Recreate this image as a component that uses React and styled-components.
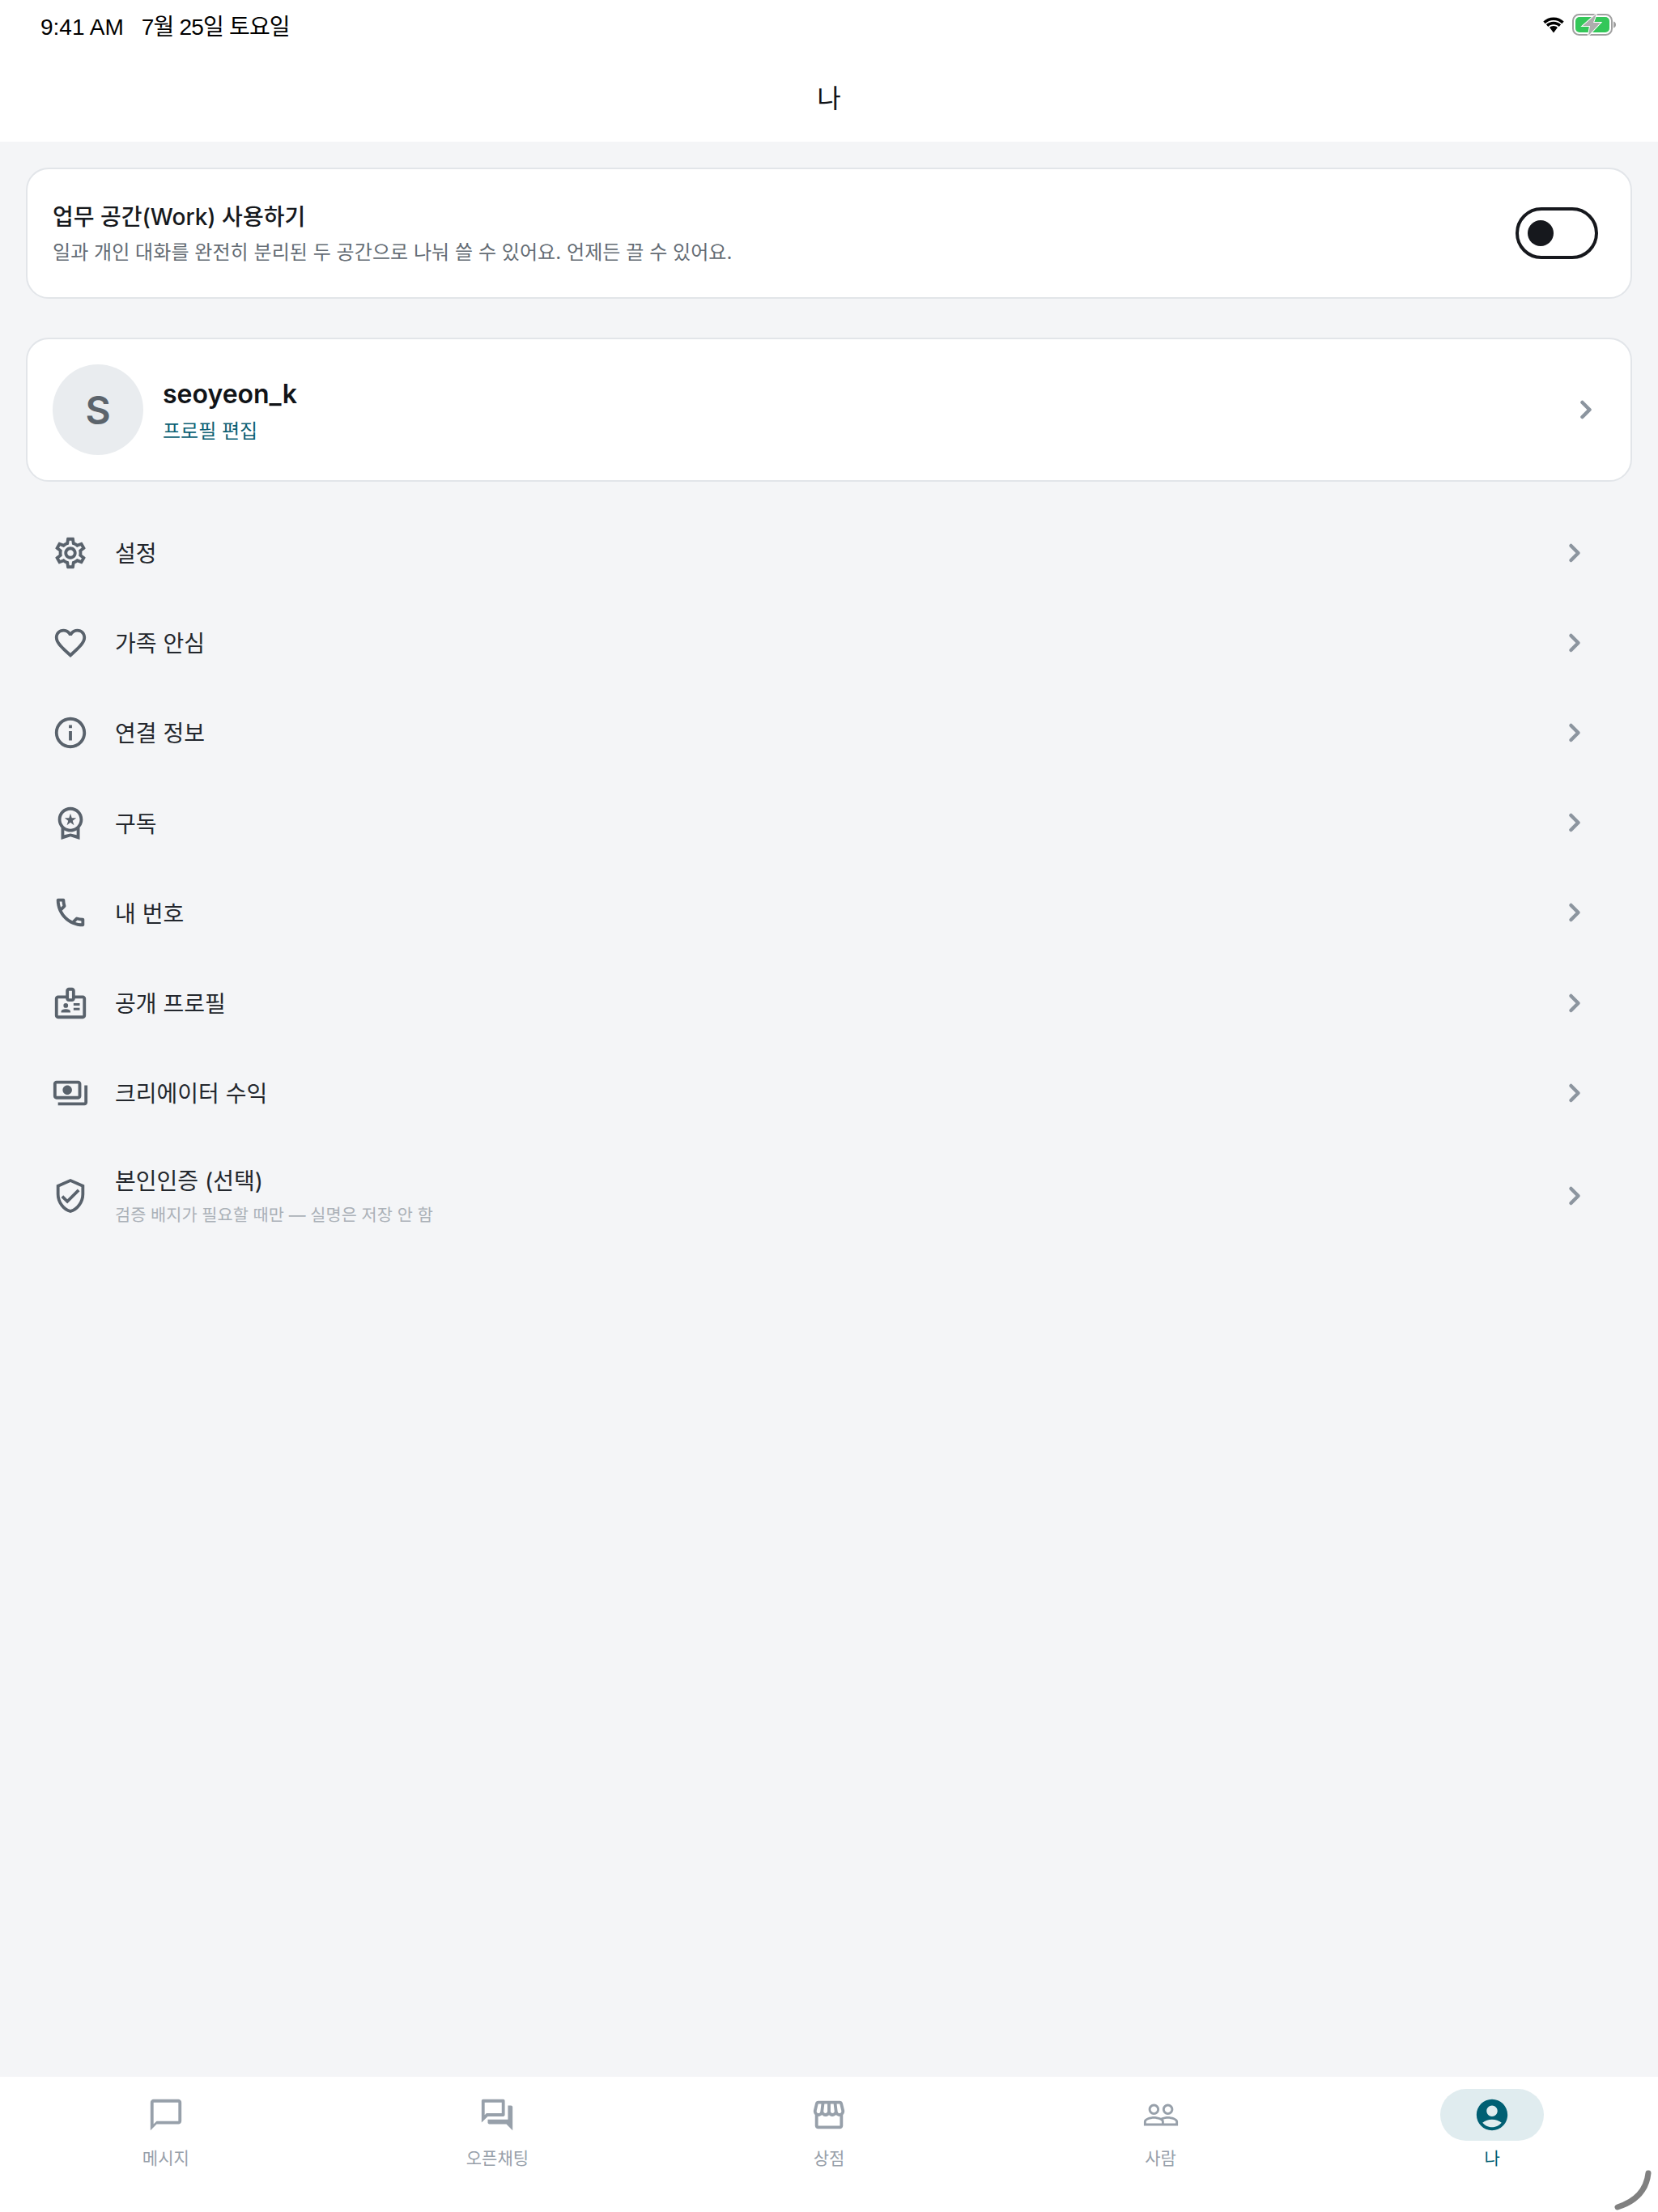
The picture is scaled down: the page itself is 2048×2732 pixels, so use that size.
import React from 'react';
import styled, { createGlobalStyle } from 'styled-components';
import { ChevronRight } from 'lucide-react';
import {
  MdOutlineSettings,
  MdFavoriteBorder,
  MdInfoOutline,
  MdOutlineWorkspacePremium,
  MdOutlineCall,
  MdOutlineBadge,
  MdOutlinePayments,
  MdOutlineVerifiedUser,
  MdOutlineChatBubbleOutline,
  MdOutlineForum,
  MdOutlineStorefront,
  MdPeopleOutline,
  MdAccountCircle,
} from 'react-icons/md';

const GlobalStyle = createGlobalStyle`
  html, body {
    margin: 0;
    padding: 0;
    background: #f4f5f7;
  }
  * {
    box-sizing: border-box;
  }
  body {
    font-family: Inter, "Noto Sans CJK KR", sans-serif;
  }
`;

const menuItems = [
  { icon: MdOutlineSettings, label: '설정' },
  { icon: MdFavoriteBorder, label: '가족 안심' },
  { icon: MdInfoOutline, label: '연결 정보' },
  { icon: MdOutlineWorkspacePremium, label: '구독' },
  { icon: MdOutlineCall, label: '내 번호' },
  { icon: MdOutlineBadge, label: '공개 프로필' },
  { icon: MdOutlinePayments, label: '크리에이터 수익' },
  {
    icon: MdOutlineVerifiedUser,
    label: '본인인증 (선택)',
    hint: '검증 배지가 필요할 때만 — 실명은 저장 안 함',
  },
];

const tabs = [
  { icon: MdOutlineChatBubbleOutline, label: '메시지' },
  { icon: MdOutlineForum, label: '오픈채팅' },
  { icon: MdOutlineStorefront, label: '상점' },
  { icon: MdPeopleOutline, label: '사람' },
  { icon: MdAccountCircle, label: '나', active: true },
];

const App = () => {
  return (
    <Page>
      <GlobalStyle />
      <TopArea>
        <StatusBar>
          <StatusText>
            <StatusTime>9:41 AM</StatusTime>
            <span>7월 25일 토요일</span>
          </StatusText>
          <StatusIcons>
            <svg width="28" height="20" viewBox="0 0 28 20">
              <path d="M14 4c4 0 7.600 1.600 10.300 4.200l2.400-2.600C23.400 2.300 18.900.4 14 .4S4.600 2.300 1.300 5.600l2.400 2.600C6.400 5.600 10 4 14 4z" fill="#000" />
              <path d="M14 9.200c2.600 0 5 1 6.700 2.700l2.400-2.600C20.700 7 17.500 5.700 14 5.700S7.300 7 4.900 9.300l2.400 2.600C9 10.200 11.400 9.200 14 9.200z" fill="#000" />
              <path d="M14 11c-1.900 0-3.600.7-4.900 1.900L14 19.600l4.900-6.700C17.600 11.700 15.900 11 14 11z" fill="#000" />
            </svg>
            <BatteryIcon width="54" height="28" viewBox="0 0 54 28">
              <rect x="1" y="1" width="48" height="25" rx="7.500" fill="none" stroke="#a0a0a0" strokeWidth="2" />
              <rect x="4" y="4" width="42" height="19" rx="5" fill="#34c759" />
              <path d="M51 9.500c2 .5 3 2 3 4s-1 3.500-3 4z" fill="#a0a0a0" />
              <path d="M30 0 13 15h9l-2 12 15-16h-9z" fill="#adadad" stroke="#fff" strokeWidth="2" paintOrder="stroke" />
            </BatteryIcon>
          </StatusIcons>
        </StatusBar>
        <Header>나</Header>
      </TopArea>

      <Main>
        <Card $padding="35px 31px">
          <WorkInfo>
            <WorkTitle>업무 공간(Work) 사용하기</WorkTitle>
            <WorkDesc>일과 개인 대화를 완전히 분리된 두 공간으로 나눠 쓸 수 있어요. 언제든 끌 수 있어요.</WorkDesc>
          </WorkInfo>
          <Toggle>
            <Knob />
          </Toggle>
        </Card>

        <Card $padding="31px 37px 31px 31px">
          <Avatar>S</Avatar>
          <ProfileInfo>
            <ProfileName>seoyeon_k</ProfileName>
            <ProfileEdit>프로필 편집</ProfileEdit>
          </ProfileInfo>
          <Chevron size={36} strokeWidth={3} />
        </Card>

        <MenuList>
          {menuItems.map(({ icon: Icon, label, hint }) => (
            <MenuRow key={label} $tall={!!hint}>
              <MenuIcon>
                <Icon size={46} />
              </MenuIcon>
              <MenuText>
                <MenuLabel>{label}</MenuLabel>
                {hint && <MenuHint>{hint}</MenuHint>}
              </MenuText>
              <Chevron size={36} strokeWidth={3} />
            </MenuRow>
          ))}
        </MenuList>
      </Main>

      <TabBar>
        {tabs.map(({ icon: Icon, label, active }) => (
          <Tab key={label} $active={active}>
            <TabPill $active={active}>
              <Icon size={46} />
            </TabPill>
            <TabLabel>{label}</TabLabel>
          </Tab>
        ))}
        <HomeCorner width="50" height="50" viewBox="0 0 50 50">
          <path d="M44 4C42 22 32 38 6 46" fill="none" stroke="#808080" strokeWidth="7" strokeLinecap="round" />
        </HomeCorner>
      </TabBar>
    </Page>
  );
};

const Page = styled.div`
  position: relative;
  width: 2048px;
  height: 2732px;
  display: flex;
  flex-direction: column;
  background: #f4f5f7;
  overflow: hidden;
`;

const TopArea = styled.div`
  background: #ffffff;
  height: 175px;
  flex: none;
`;

const StatusBar = styled.div`
  height: 62px;
  padding: 0 52px 0 50px;
  display: flex;
  align-items: center;
  justify-content: space-between;
`;

const StatusText = styled.div`
  display: flex;
  align-items: baseline;
  gap: 22px;
  font-family: "Liberation Sans", "Noto Sans CJK KR", sans-serif;
  font-size: 28px;
  letter-spacing: -0.8px;
  color: #000000;
`;

const StatusTime = styled.span`
  letter-spacing: 0;
`;

const StatusIcons = styled.div`
  display: flex;
  align-items: center;
  gap: 9px;
`;

const BatteryIcon = styled.svg`
  overflow: visible;
`;

const Header = styled.div`
  height: 113px;
  display: flex;
  align-items: center;
  justify-content: center;
  font-size: 32px;
  font-weight: 400;
  color: #111418;
`;

const Main = styled.main`
  flex: 1;
  padding: 32px 32px 0;
  display: flex;
  flex-direction: column;
  gap: 48px;
`;

const Card = styled.section`
  display: flex;
  align-items: center;
  padding: ${(p) => p.$padding};
  background: #ffffff;
  border: 2px solid #e2e5e9;
  border-radius: 28px;
`;

const WorkInfo = styled.div`
  flex: 1;
  padding-top: 2px;
  display: flex;
  flex-direction: column;
  gap: 2px;
`;

const WorkTitle = styled.div`
  font-size: 28px;
  line-height: 44px;
  font-weight: 500;
  color: #16191d;
`;

const WorkDesc = styled.div`
  font-size: 24px;
  line-height: 40px;
  letter-spacing: 0.05px;
  color: #646c74;
`;

const Toggle = styled.div`
  width: 102px;
  height: 64px;
  margin-right: 9px;
  padding: 0 11px;
  display: flex;
  align-items: center;
  border: 4px solid #16181d;
  border-radius: 32px;
`;

const Knob = styled.div`
  width: 32px;
  height: 32px;
  border-radius: 50%;
  background: #16181d;
`;

const Avatar = styled.div`
  width: 112px;
  height: 112px;
  flex: none;
  display: flex;
  align-items: center;
  justify-content: center;
  border-radius: 50%;
  background: #e9ecef;
  color: #5c646c;
  font-size: 48px;
  font-weight: 600;
`;

const ProfileInfo = styled.div`
  flex: 1;
  margin-left: 24px;
  padding-top: 3px;
  display: flex;
  flex-direction: column;
  gap: 6px;
`;

const ProfileName = styled.div`
  font-size: 32px;
  line-height: 44px;
  font-weight: 600;
  color: #111418;
`;

const ProfileEdit = styled.div`
  font-size: 24px;
  line-height: 36px;
  color: #0b5f73;
`;

const Chevron = styled(ChevronRight)`
  flex: none;
  color: #8c959f;
`;

const MenuList = styled.div`
  margin-top: -16px;
  display: flex;
  flex-direction: column;
`;

const MenuRow = styled.div`
  height: ${(p) => (p.$tall ? '143px' : '111.2px')};
  padding: 0 53px 0 32px;
  display: flex;
  align-items: center;
  gap: 32px;
`;

const MenuIcon = styled.div`
  width: 46px;
  height: 46px;
  flex: none;
  color: #59626c;
`;

const MenuText = styled.div`
  flex: 1;
  padding-top: 3px;
  display: flex;
  flex-direction: column;
  gap: 6px;
`;

const MenuLabel = styled.div`
  font-size: 28px;
  line-height: 40px;
  color: #23272d;
`;

const MenuHint = styled.div`
  font-size: 20.800px;
  line-height: 32px;
  color: #abb1b8;
`;

const TabBar = styled.nav`
  position: relative;
  height: 167px;
  flex: none;
  display: flex;
  background: #ffffff;
  padding-top: 15px;
`;

const Tab = styled.div`
  flex: 1;
  display: flex;
  flex-direction: column;
  align-items: center;
  gap: 5px;
  color: ${(p) => (p.$active ? '#005f73' : '#97a0aa')};
`;

const TabPill = styled.div`
  width: 128px;
  height: 64px;
  display: flex;
  align-items: center;
  justify-content: center;
  border-radius: 32px;
  background: ${(p) => (p.$active ? '#e0ecef' : 'transparent')};
`;

const TabLabel = styled.div`
  font-size: 21px;
  line-height: 34px;
`;

const HomeCorner = styled.svg`
  position: absolute;
  right: 6px;
  bottom: 2px;
`;

export default App;
